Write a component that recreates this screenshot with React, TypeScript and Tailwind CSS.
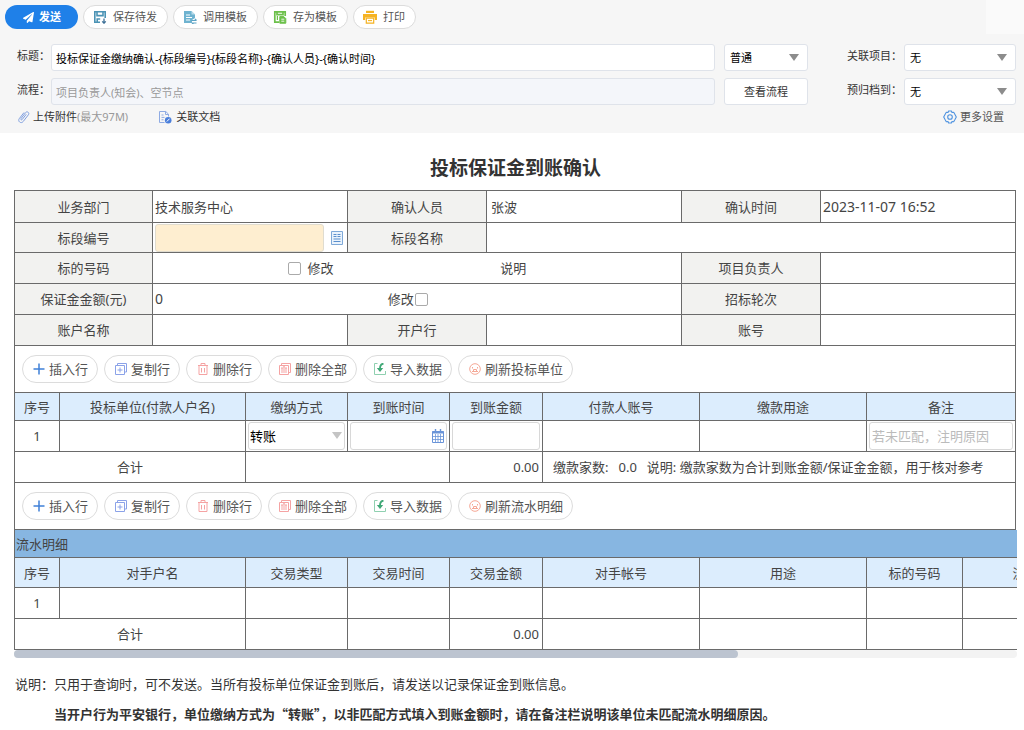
import type { ReactNode } from "react";
import clsx from "clsx";
import { FaPaperPlane } from "react-icons/fa";

// --- Iconos ---
const SaveIcon = () => (
  <svg width="14" height="14" viewBox="0 0 14 14" fill="none" stroke="#4b93b5" strokeWidth="1.6">
    <path d="M7 12.2H1.8V1.8h10.4V8" />
    <path d="M4 2v3.600h6V2" />
    <path d="M4.200 12V9h3" />
    <path d="M11 8.500v4.700M9.200 11.400l1.800 1.800 1.800-1.800" stroke="#3c6f96" strokeWidth="1.300" />
  </svg>
);

const TemplateIcon = () => (
  <svg width="14" height="14" viewBox="0 0 14 14">
    <path d="M1 1h7.500L12 4.500V8L9 10v3H1z" fill="#6fb3d0" />
    <path d="M8.500 1v3.500H12" fill="#b9dcea" />
    <path d="M3 5h4M3 7.500h6M3 10h4" stroke="#fff" strokeWidth="1" />
    <path d="M8.500 10.500h5M9 13h4.500M11.800 8.800l1.800 1.700M10.600 14.500L9 13" stroke="#5aa2c4" strokeWidth="1.100" />
  </svg>
);

const SaveTemplateIcon = () => (
  <svg width="14" height="14" viewBox="0 0 14 14" fill="none" stroke="#6cc04a" strokeWidth="1.700">
    <path d="M6 12.200H1.800V1.800h10.400V6" />
    <path d="M4 2v2.600h6V2" />
    <path d="M6.800 6.600h4l2 2v4.600h-6z" fill="#6cc04a" strokeWidth="1" />
    <path d="M8.300 9.200h3M8.300 11.200h3" stroke="#fff" strokeWidth="0.900" />
    <path d="M4.400 6v4" strokeWidth="1.200" />
  </svg>
);

const PrintIcon = () => (
  <svg width="14" height="14" viewBox="0 0 14 14">
    <path d="M3 .8h8V3H3z" fill="#f5b323" />
    <path d="M0 4h14v6h-2.200V7.500H2.200V10H0z" fill="#f5b323" />
    <path d="M3.300 8.200h7.400v5H3.300z" fill="none" stroke="#f5b323" strokeWidth="1.200" />
    <path d="M5 10.600h4" stroke="#f5b323" strokeWidth="1.100" />
  </svg>
);

const ClipIcon = () => (
  <svg width="13" height="14" viewBox="0 0 13 14" fill="none" stroke="#7f9fe0" strokeLinecap="round">
    <path d="M9 4.600L5.200 9.500c-.7.900-1.900 0-1.200-.9l4.600-6c1.500-1.900 4.300.2 2.800 2.200L6.200 11.500c-2.100 2.700-5.900-.2-3.900-2.900L6.800 2.800" />
  </svg>
);

const DocIcon = () => (
  <svg width="14" height="14" viewBox="0 0 14 14" fill="none" stroke="#8fabe3">
    <path d="M6.500 12.500h-5V1.500h6.300l2.700 2.700v2.300" />
    <path d="M7.500 1.500v3h3M3.500 5h2M3.500 7.400h3M3.500 9.800h2" />
    <circle cx="10.200" cy="10.200" r="3.300" fill="#4b7fdb" stroke="none" />
    <path d="M8.800 11.500l2.800-2.800" stroke="#fff" />
  </svg>
);

const GearIcon = () => (
  <svg width="14" height="14" viewBox="0 0 14 14" fill="none" stroke="#4f93e0" strokeWidth="1.100" strokeLinejoin="round">
    <path d="M5.600 1h2.800l.6 1.500 1.700-.2 1.400 2.400L13.300 7l-1.200 2.300-1.400 2.400-1.700-.2-.6 1.500H5.600L5 11.500l-1.700.2-1.400-2.400L.7 7l1.200-2.300 1.400-2.400 1.700.2z" />
    <circle cx="7" cy="7" r="2.300" />
  </svg>
);

const PlusIcon = () => (
  <svg width="12" height="12" viewBox="0 0 12 12" stroke="#3f80d8" strokeWidth="1.500">
    <path d="M6 .5v11M.5 6h11" />
  </svg>
);

const CopyIcon = () => (
  <svg width="12" height="12" viewBox="0 0 12 12" fill="none" stroke="#8ba2e8">
    <path d="M2.500 2.500V.5h9v8.500h-2" />
    <path d="M.5 2.500h9v9h-9zM5 4.500v5M2.500 7h5" />
  </svg>
);

const TrashIcon = () => (
  <svg width="12" height="12" viewBox="0 0 12 12" fill="none" stroke="#f5a3a3">
    <path d="M1 2.500h10M4 2.500v-2h4v2M2 2.500v9h8v-9M4.500 5v4.500M7.500 5v4.500" />
  </svg>
);

const TrashAllIcon = () => (
  <svg width="12" height="12" viewBox="0 0 12 12" fill="none" stroke="#f5a3a3">
    <path d="M2.500 2.500V.5h9v9h-2" />
    <path d="M.5 2.500h9v9h-9zM2 5h6M3 5v5M7 5v5M5 6v4M4 3.800h2" />
  </svg>
);

const ImportIcon = () => (
  <svg width="12" height="12" viewBox="0 0 12 12" fill="none" stroke="#8fd0b0">
    <path d="M3.500.5h-3v11h11V8" />
    <path d="M9.500.5C7 1 6 2.500 6 5.500" stroke="#3fa876" strokeWidth="1.800" />
    <path d="M2.800 5h6.400L6 9z" fill="#3fa876" stroke="none" />
  </svg>
);

const RefreshIcon = () => (
  <svg width="12" height="12" viewBox="0 0 12 12" fill="none" stroke="#f5a896">
    <circle cx="6" cy="6" r="5.300" />
    <path d="M3.500 5.500V4M8.500 5.500V4M3 8.500h6M4.500 6.500h3v2h-3z" />
  </svg>
);

const ListIcon = () => (
  <svg width="12" height="14" viewBox="0 0 12 14" fill="none">
    <path d="M.5.500h11v13H.5z" fill="#eaf3fc" stroke="#7fa9d8" />
    <path d="M2.500 3.500h3M6.500 3.500h3M2.500 5.500h3M6.500 5.500h3M2.500 8h7M2.500 10.500h7" stroke="#5b8fcd" />
  </svg>
);

const CalendarIcon = () => (
  <svg width="12" height="14" viewBox="0 0 12 14" fill="none" stroke="#6a94d8">
    <path d="M.5 2.500h11v11H.5z" />
    <path d="M0 3.500h12" strokeWidth="2" />
    <path d="M3.500 0v3M8.500 0v3" strokeWidth="1.400" />
    <path d="M1 7.500h10M1 10.500h10M3.500 5v8M6 5v8M8.500 5v8" strokeWidth=".8" />
  </svg>
);

// --- Controles ---
const TopButton = ({ icon, children }: { icon: ReactNode; children: ReactNode }) => (
  <button className="flex h-6 items-center gap-1.5 rounded-full border border-[#dcdcdc] bg-white pr-[10px] pl-[9px] text-[#555]">
    {icon}
    {children}
  </button>
);

const RowButton = ({ icon, children }: { icon: ReactNode; children: ReactNode }) => (
  <button className="flex h-7 items-center gap-1 rounded-full border border-[#dcdcdc] bg-white pr-[9px] pl-[10px] text-[#555]">
    {icon}
    {children}
  </button>
);

const CHECKBOX = "size-[13px] appearance-none rounded-[2px] border border-[#aaa] bg-white checked:bg-[#1f80e8]";

type SelectBoxProps = { label: string; value: string; id?: string; light?: boolean };

const SelectBox = ({ label, value, id, light }: SelectBoxProps) => (
  <div className="relative">
    <select
      id={id}
      aria-label={id ? undefined : label}
      className={clsx(
        "w-full appearance-none rounded-[3px] border bg-white text-black outline-none",
        light ? "h-7 border-[#d8d8d8] pl-px" : "h-[27px] border-[#dfe3ea] pl-[5px]"
      )}
    >
      <option>{value}</option>
    </select>
    <svg
      className={clsx("pointer-events-none absolute top-[10px]", light ? "right-[3px]" : "right-[9px]")}
      width="10"
      height="7"
      viewBox="0 0 10 7"
    >
      <path d="M0 0h10L5 7z" fill={light ? "#c4c4c4" : "#8c8c8c"} />
    </svg>
  </div>
);

const Actions = ({ refresh }: { refresh: string }) => (
  <div className="flex h-[47px] items-center gap-1.5 border-r border-b border-[#6a6a6a] px-[7px]">
    <RowButton icon={<PlusIcon />}>插入行</RowButton>
    <RowButton icon={<CopyIcon />}>复制行</RowButton>
    <RowButton icon={<TrashIcon />}>删除行</RowButton>
    <RowButton icon={<TrashAllIcon />}>删除全部</RowButton>
    <RowButton icon={<ImportIcon />}>导入数据</RowButton>
    <RowButton icon={<RefreshIcon />}>{refresh}</RowButton>
  </div>
);

const Cell = ({ children, span, className }: { children?: ReactNode; span?: number; className?: string }) => (
  <td colSpan={span} className={clsx("border-r border-b border-[#6a6a6a] p-0", className)}>
    {children}
  </td>
);

const Label = ({ children }: { children: ReactNode }) => (
  <th scope="row" className="border-r border-b border-[#6a6a6a] bg-[#f2f2f0] p-0 font-normal">
    {children}
  </th>
);

const HeadRow = ({ names, className }: { names: string[]; className: string }) => (
  <tr className={clsx("bg-[#dcedfd]", className)}>
    {names.map((name) => (
      <th key={name} scope="col" className="border-r border-b border-[#6a6a6a] p-0 font-normal">
        {name}
      </th>
    ))}
  </tr>
);

const PAY_HEADS = ["序号", "投标单位(付款人户名)", "缴纳方式", "到账时间", "到账金额", "付款人账号", "缴款用途", "备注"];
const FLOW_HEADS = ["序号", "对手户名", "交易类型", "交易时间", "交易金额", "对手帐号", "用途", "标的号码", "流水号", ""];

export default function App() {
  return (
    <div
      lang="zh-CN"
      className="min-h-screen bg-white font-['Noto_Sans','Noto_Sans_CJK_SC',sans-serif] text-[13px] leading-5 text-[#444]"
    >
      {/* Cabecera */}
      <header className="bg-[#f6f6f6] pb-1.5 text-[11px] text-[#333]">
        <div className="flex">
          <div className="flex flex-1 gap-[5px] pt-[5px] pl-[5px]">
            <button className="flex h-6 items-center gap-[5px] rounded-full bg-[#1f80e8] pr-[17px] pl-[18px] font-bold text-white">
              <FaPaperPlane size={11} />
              发送
            </button>
            <TopButton icon={<SaveIcon />}>保存待发</TopButton>
            <TopButton icon={<TemplateIcon />}>调用模板</TopButton>
            <TopButton icon={<SaveTemplateIcon />}>存为模板</TopButton>
            <TopButton icon={<PrintIcon />}>打印</TopButton>
          </div>
          <div className="h-[34px] w-[38px] bg-[#fafafa]" />
        </div>

        <div className="grid grid-cols-[34px_1fr_9px_84px_39px_57px_112px] gap-y-[7px] pt-[10px] pr-2 pl-[17px]">
          <label htmlFor="subject" className="pt-0.5">标题：</label>
          <input
            id="subject"
            className="h-[27px] rounded-[3px] border border-[#dfe3ea] bg-white px-1 text-black outline-none"
            defaultValue="投标保证金缴纳确认-{标段编号}{标段名称}-{确认人员}-{确认时间}"
          />
          <div className="col-start-4">
            <SelectBox label="重要程度" value="普通" />
          </div>
          <label htmlFor="project" className="col-start-6 pt-0.5">关联项目：</label>
          <SelectBox id="project" label="关联项目" value="无" />

          <label htmlFor="flow" className="pt-0.5">流程：</label>
          <input
            id="flow"
            readOnly
            className="h-[27px] rounded-[3px] border border-[#dfe3ea] bg-[#f4f6fa] px-1 text-[#999] outline-none"
            defaultValue="项目负责人(知会)、空节点"
          />
          <button className="col-start-4 h-[27px] rounded-[3px] border border-[#dfe3ea] bg-white">查看流程</button>
          <label htmlFor="archive" className="col-start-6 pt-0.5">预归档到：</label>
          <SelectBox id="archive" label="预归档到" value="无" />
        </div>

        <div className="flex items-center pt-0.5 pr-5 pl-[17px]">
          <a href="#" className="flex items-center gap-[3px]">
            <ClipIcon />
            <span>上传附件<span className="text-[#999]">(最大97M)</span></span>
          </a>
          <a href="#" className="ml-[30px] flex items-center gap-1">
            <DocIcon />
            关联文档
          </a>
          <a href="#" className="ml-auto flex items-center gap-[3px] text-[#555]">
            <GearIcon />
            更多设置
          </a>
        </div>
      </header>

      <main className="pr-[7px] pl-[14px]">
        <h1 className="pt-[21px] pb-2 text-center text-[19px] leading-7 font-bold text-[#333]">投标保证金到账确认</h1>

        {/* Datos generales */}
        <div className="mr-px border-t border-l border-[#6a6a6a]">
          <table className="w-full table-fixed border-separate border-spacing-0">
            <colgroup>
              <col className="w-[138px]" />
              <col className="w-[195px]" />
              <col className="w-[139px]" />
              <col className="w-[195px]" />
              <col className="w-[139px]" />
              <col className="w-[195px]" />
            </colgroup>
            <tbody>
              <tr className="h-8">
                <Label>业务部门</Label>
                <Cell className="pl-0.5">技术服务中心</Cell>
                <Label>确认人员</Label>
                <Cell className="pl-1">张波</Cell>
                <Label>确认时间</Label>
                <Cell className="pl-0.5 text-sm">2023-11-07 16:52</Cell>
              </tr>
              <tr className="h-[30px]">
                <Label>标段编号</Label>
                <Cell className="pl-0.5">
                  <div className="flex items-center gap-[7px]">
                    <input
                      aria-label="标段编号"
                      className="h-7 w-[169px] rounded-[3px] border border-[#e0dccf] bg-[#feeed0] outline-none"
                    />
                    <button aria-label="选择标段">
                      <ListIcon />
                    </button>
                  </div>
                </Cell>
                <Label>标段名称</Label>
                <Cell span={3} />
              </tr>
              <tr className="h-[31px]">
                <Label>标的号码</Label>
                <Cell span={3}>
                  <div className="grid grid-cols-[195fr_139fr_195fr]">
                    <label className="flex items-center justify-end gap-[7px] pr-[14px]">
                      <input type="checkbox" className={CHECKBOX} />
                      修改
                    </label>
                    <span className="col-start-3 pl-[14px]">说明</span>
                  </div>
                </Cell>
                <Label>项目负责人</Label>
                <Cell />
              </tr>
              <tr className="h-[31px]">
                <Label>保证金金额(元)</Label>
                <Cell span={3}>
                  <div className="grid grid-cols-[195fr_139fr_195fr]">
                    <span className="pl-0.5 text-sm">0</span>
                    <label className="flex items-center gap-px pl-10">
                      修改
                      <input type="checkbox" className={CHECKBOX} />
                    </label>
                  </div>
                </Cell>
                <Label>招标轮次</Label>
                <Cell />
              </tr>
              <tr className="h-[31px]">
                <Label>账户名称</Label>
                <Cell />
                <Label>开户行</Label>
                <Cell />
                <Label>账号</Label>
                <Cell />
              </tr>
            </tbody>
          </table>

          {/* Pagos */}
          <Actions refresh="刷新投标单位" />
          <table className="w-full table-fixed border-separate border-spacing-0">
            <colgroup>
              <col className="w-[45px]" />
              <col className="w-[186px]" />
              <col className="w-[102px]" />
              <col className="w-[102px]" />
              <col className="w-[93px]" />
              <col className="w-[157px]" />
              <col className="w-[167px]" />
              <col className="w-[149px]" />
            </colgroup>
            <thead>
              <HeadRow names={PAY_HEADS} className="h-7" />
            </thead>
            <tbody>
              <tr className="h-[31px]">
                <Cell className="text-center">1</Cell>
                <Cell />
                <Cell className="px-0.5">
                  <SelectBox label="缴纳方式" value="转账" light />
                </Cell>
                <Cell className="px-0.5">
                  <div className="flex h-7 items-center rounded-[3px] border border-[#d8d8d8] pr-0.5">
                    <input aria-label="到账时间" className="w-full min-w-0 outline-none" />
                    <button aria-label="选择日期">
                      <CalendarIcon />
                    </button>
                  </div>
                </Cell>
                <Cell className="px-0.5">
                  <input
                    aria-label="到账金额"
                    className="block h-7 w-full rounded-[3px] border border-[#d8d8d8] outline-none"
                  />
                </Cell>
                <Cell />
                <Cell />
                <Cell className="px-0.5">
                  <input
                    aria-label="备注"
                    placeholder="若未匹配，注明原因"
                    className="block h-7 w-full rounded-[3px] border border-[#d8d8d8] px-0.5 outline-none placeholder:text-[#bbb]"
                  />
                </Cell>
              </tr>
              <tr className="h-[31px]">
                <Cell span={2} className="text-center">合计</Cell>
                <Cell span={2} />
                <Cell className="pr-[3px] text-right">0.00</Cell>
                <Cell span={3} className="pl-[10px] whitespace-nowrap">
                  缴款家数:<span className="mx-[10px]">0.0</span>说明: 缴款家数为合计到账金额/保证金金额，用于核对参考
                </Cell>
              </tr>
            </tbody>
          </table>
          <Actions refresh="刷新流水明细" />
        </div>

        {/* Movimientos */}
        <div className="overflow-hidden border-l border-[#6a6a6a]">
          <table className="w-[1390px] table-fixed border-separate border-spacing-0">
            <colgroup>
              <col className="w-[45px]" />
              <col className="w-[186px]" />
              <col className="w-[102px]" />
              <col className="w-[102px]" />
              <col className="w-[93px]" />
              <col className="w-[157px]" />
              <col className="w-[167px]" />
              <col className="w-[96px]" />
              <col className="w-[139px]" />
              <col className="w-[303px]" />
            </colgroup>
            <thead>
              <tr className="h-7 bg-[#87b6e1]">
                <th colSpan={10} className="border-b border-[#6a6a6a] p-0 pl-px text-left font-normal">
                  流水明细
                </th>
              </tr>
              <HeadRow names={FLOW_HEADS} className="h-[30px]" />
            </thead>
            <tbody>
              <tr className="h-[31px]">
                <Cell className="text-center">1</Cell>
                {FLOW_HEADS.slice(1).map((name) => (
                  <Cell key={name} />
                ))}
              </tr>
              <tr className="h-[31px]">
                <Cell span={2} className="text-center">合计</Cell>
                <Cell />
                <Cell />
                <Cell className="pr-[3px] text-right">0.00</Cell>
                {FLOW_HEADS.slice(5).map((name) => (
                  <Cell key={name} />
                ))}
              </tr>
            </tbody>
          </table>
        </div>
        <div className="h-2 rounded-full bg-[#f3f3f3]">
          <div className="h-2 w-[72.2%] rounded-full bg-[#bcc4d0]" />
        </div>

        {/* Notas */}
        <div className="pt-4 pl-px font-['Noto_Sans_CJK_SC',sans-serif] text-[#333]">
          <p>说明：只用于查询时，可不发送。当所有投标单位保证金到账后，请发送以记录保证金到账信息。</p>
          <p className="pt-[10px] pl-[39px] font-bold">
            当开户行为平安银行，单位缴纳方式为“转账”，以非匹配方式填入到账金额时，请在备注栏说明该单位未匹配流水明细原因。
          </p>
        </div>
      </main>
    </div>
  );
}
